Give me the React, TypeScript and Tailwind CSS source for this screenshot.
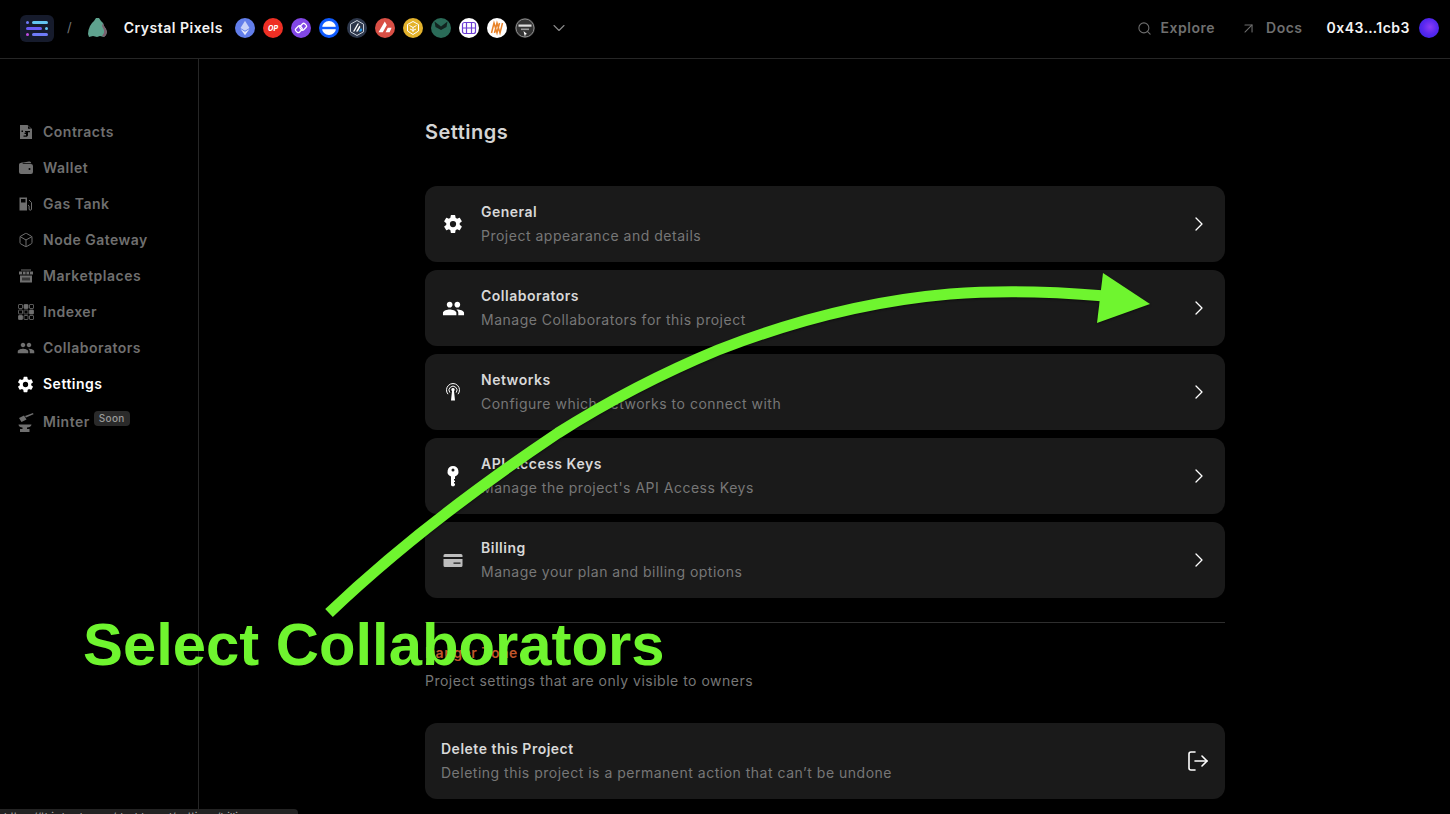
import { ReactNode } from "react"
import { ChevronDown, ChevronRight, Search, ArrowUpRight, LogOut, Box } from "lucide-react"
import { MdPeople } from "react-icons/md"
import { IoSettingsSharp, IoWallet } from "react-icons/io5"

function ContractIcon() {
  return (
    <svg width="12" height="14" viewBox="0 0 12 14" fill="currentColor">
      <path fillRule="evenodd" d="M0 0h7.500L12 4v10H0V0zm8 1v2.700h3L8 1zM5 6h5v1.200H8V10c0 1-.8 1.800-2 1.800H3.500v-1.300H6V9H4.500V7.800H6V7.200H5V6zM1.500 5.500H3V7H1.500V5.500z" />
    </svg>
  )
}

function GasIcon() {
  return (
    <svg width="16" height="16" viewBox="0 0 16 16" fill="none">
      <path fill="currentColor" fillRule="evenodd" d="M1.500 1.500h7.500v13H1.500v-13zM3 3v3.500h4.500V3H3z" />
      <path stroke="currentColor" strokeWidth="1" d="M11 4l2.500 2.500v6.500a1.200 1.200 0 0 1-2.400 0V10L10 9" />
    </svg>
  )
}

function ShopIcon() {
  return (
    <svg width="16" height="16" viewBox="0 0 16 16" fill="currentColor">
      <path d="M3 1.500h10v1H3zM1 3.500h14v3H1zM2 7.500h12v7H2z" />
      <path stroke="#000" strokeWidth="0.800" d="M4.500 3.500v3M8 3.500v3M11.500 3.500v3" />
      <path fill="#000" d="M4 9.500h8v3H4z" opacity="0.500" />
    </svg>
  )
}

function GridIcon() {
  const cells = [0, 1, 0, 0, 0, 1, 1, 0, 0]
  return (
    <svg width="16" height="16" viewBox="0 0 16 16" fill="none">
      {cells.map((on, i) => (
        <rect
          key={i}
          x={0.500 + (i % 3) * 5.500}
          y={0.500 + Math.floor(i / 3) * 5.500}
          width="4"
          height="4"
          rx="0.500"
          fill={on ? "currentColor" : "none"}
          stroke="currentColor"
          strokeWidth="0.800"
        />
      ))}
    </svg>
  )
}

function AnvilIcon() {
  return (
    <svg width="17" height="19" viewBox="0 0 17 19" fill="currentColor">
      <path d="M2 5l5-2.500 2.500 4-5 2.500zM8 3l8-3 .5 1.200L9 4.500z" />
      <path d="M1.500 11.500h13c0 2-2.500 3-4.500 3v1.500h2.500V19H3v-3h2.500v-1.500c-2 0-4-1-4-3z" />
    </svg>
  )
}

function TowerIcon() {
  return (
    <svg width="16" height="18" viewBox="0 0 16 18" fill="none" stroke="currentColor" strokeWidth="1">
      <path d="M3 11.200a6.500 6.500 0 1 1 10 0" />
      <path d="M4.800 9.600a4 4 0 1 1 6.400 0" />
      <path fill="currentColor" stroke="none" d="M8 5a1.700 1.700 0 0 1 1 3.100L10 17.500H6L7 8.100A1.700 1.700 0 0 1 8 5z" />
    </svg>
  )
}

function KeyIcon() {
  return (
    <svg width="20" height="22" viewBox="0 0 20 22" fill="currentColor">
      <path fillRule="evenodd" d="M10 1a5.500 5.500 0 0 1 2 10.600V14h-1v1.500h1V17h-1v1.500h1V20l-1 1.200H9l-1-1V11.600A5.500 5.500 0 0 1 10 1zm0 2.500a1.500 1.500 0 1 0 0 3 1.500 1.500 0 0 0 0-3z" />
    </svg>
  )
}

function CardIcon() {
  return (
    <svg width="20" height="13" viewBox="0 0 20 13" fill="#bdbdbd">
      <path d="M2 0h16a1.500 1.500 0 0 1 1.500 1.500V3H.5V1.500A1.500 1.500 0 0 1 2 0z" />
      <path fillRule="evenodd" d="M.5 5h19v6.500A1.500 1.500 0 0 1 18 13H2a1.500 1.500 0 0 1-1.500-1.500V5zM10.500 8.500v1.300h7V8.500h-7z" />
    </svg>
  )
}

function ChainIcon({ children }: { children: ReactNode }) {
  return (
    <svg width="20" height="20" viewBox="0 0 20 20" className="shrink-0">
      {children}
    </svg>
  )
}

function Chains() {
  return (
    <div className="flex items-center gap-2">
      <ChainIcon>
        <circle cx="10" cy="10" r="10" fill="#627eea" />
        <path d="M10 2.800l4.500 7.200L10 12.700 5.500 10z" fill="#c9d3f8" />
        <path d="M10 13.800l4.500-2.800L10 17.200 5.500 11z" fill="#e4e9fc" />
      </ChainIcon>
      <ChainIcon>
        <circle cx="10" cy="10" r="10" fill="#ee2f24" />
        <text x="10" y="12.500" textAnchor="middle" fontSize="7" fontWeight="800" fontStyle="italic" fill="#fff" fontFamily="Inter, sans-serif">OP</text>
      </ChainIcon>
      <ChainIcon>
        <circle cx="10" cy="10" r="10" fill="#8247e5" />
        <rect x="4.600" y="8.800" width="6.500" height="5" rx="1.500" transform="rotate(-45 7.800 11.300)" fill="none" stroke="#fff" strokeWidth="1.300" />
        <rect x="8.900" y="6.200" width="6.500" height="5" rx="1.500" transform="rotate(-45 12.200 8.700)" fill="none" stroke="#fff" strokeWidth="1.300" />
      </ChainIcon>
      <ChainIcon>
        <circle cx="10" cy="10" r="10" fill="#0f5bff" />
        <circle cx="10" cy="10" r="7" fill="#fff" />
        <rect x="3" y="8.800" width="14" height="2.400" fill="#0f5bff" />
      </ChainIcon>
      <ChainIcon>
        <circle cx="10" cy="10" r="10" fill="#2d374b" />
        <path d="M10 2.500l6.500 3.700v7.600L10 17.500l-6.500-3.700V6.200z" fill="none" stroke="#d9e0ea" strokeWidth="0.900" />
        <path d="M6 13.500l4.500-8H12l-4.500 8zM9 13.500l3.500-6 .9 1.600-2.600 4.400z" fill="#fff" />
        <path d="M11.800 13.500l2.200-3.600 1.200 2.100-1 1.500z" fill="#28a0f0" />
      </ChainIcon>
      <ChainIcon>
        <circle cx="10" cy="10" r="10" fill="#d94f45" />
        <path d="M9.800 3.500l2 3.400-4 7.300H3.500zM12.800 9.800h3.800l-2 4.400h-4z" fill="#fff" />
      </ChainIcon>
      <ChainIcon>
        <circle cx="10" cy="10" r="10" fill="#e3b22c" />
        <path d="M10 3.500l5.500 3v6.500L10 16.500 4.500 13V6.500z" fill="none" stroke="#fff" strokeWidth="1" />
        <path d="M6.500 7.500L10 9.500l3.500-2M10 9.500v4.500M7 11l3 1.500 3-1.500" fill="none" stroke="#fff" strokeWidth="1" />
      </ChainIcon>
      <ChainIcon>
        <circle cx="10" cy="10" r="10" fill="#2a6b58" />
        <path d="M3.500 3.500L10 8.500l6.500-5-1 5.500-5.500 3-5.500-3z" fill="#12231f" />
      </ChainIcon>
      <ChainIcon>
        <circle cx="10" cy="10" r="10" fill="#fff" />
        <rect x="3.500" y="4.500" width="13" height="11" rx="2" fill="none" stroke="#6d3fd4" strokeWidth="1.200" />
        <path d="M3.500 10h13M7.500 4.500v11M12.500 4.500v11" stroke="#6d3fd4" strokeWidth="1.200" />
      </ChainIcon>
      <ChainIcon>
        <circle cx="10" cy="10" r="10" fill="#fff" />
        <path d="M4.500 15l2.500-10 3 10 2.500-10M7.500 15l2.500-10 3 10 2.500-10" stroke="#e8832a" strokeWidth="1.500" fill="none" />
      </ChainIcon>
      <ChainIcon>
        <circle cx="10" cy="10" r="10" fill="#333" />
        <circle cx="10" cy="10" r="9" fill="none" stroke="#888" strokeWidth="1" />
        <rect x="3.500" y="6.500" width="13" height="2.200" fill="#ddd" />
        <rect x="6" y="10.500" width="8" height="1.600" fill="#999" />
        <path d="M8.500 13l3.500 3-1.500.5L10 19z" fill="#fff" />
      </ChainIcon>
    </div>
  )
}

function Header() {
  return (
    <header className="flex h-[59px] items-center justify-between border-b border-[#262626] pr-[11px] pb-0.5 pl-5">
      <div className="flex items-center">
        <div className="flex h-[27px] w-[34px] flex-col justify-center gap-[3px] rounded-md bg-[#161b2c] px-1.5">
          <div className="flex items-center gap-[3px]">
            <span className="size-[3px] rounded-full bg-[#6f7bf7]" />
            <span className="h-[3px] w-[16px] rounded-full bg-[#63c5f0]" />
          </div>
          <div className="flex items-center gap-[3px]">
            <span className="h-[3px] w-[16px] rounded-full bg-[#6a5cf5]" />
            <span className="size-[3px] rounded-full bg-[#63c5f0]" />
          </div>
          <div className="flex items-center gap-[3px]">
            <span className="size-[3px] rounded-full bg-[#c04be0]" />
            <span className="h-[3px] w-[16px] rounded-full bg-[#6f7bf7]" />
          </div>
        </div>
        <span className="ml-[13px] text-[13px] text-[#777]">/</span>
        <svg width="24" height="24" viewBox="0 0 24 24" className="ml-[13px]">
          <path d="M11 2h3l2 3 2 2 1 3 2 3 1 3-1 3-2 2-4-1-3 1-4-1-4 1-1-3 .5-4L5 10l2-3 2-2z" fill="#5ea28e" />
          <path d="M18 7l1 3 2 3 1 3-1 3-2 2-2-1 2-3v-3l-2-4z" fill="#7a5f6e" />
        </svg>
        <span className="ml-[15px] text-sm font-semibold tracking-[0.5px] text-[#f4f4f4]">Crystal Pixels</span>
        <div className="ml-[12px]">
          <Chains />
        </div>
        <ChevronDown className="ml-[14px] size-[20px] text-[#8a8a8a]" strokeWidth={1.300} />
      </div>
      <div className="flex items-center text-sm font-semibold tracking-[0.5px] text-[#6f6f6f]">
        <Search className="size-[15px]" strokeWidth={1.700} />
        <span className="ml-[9px]">Explore</span>
        <ArrowUpRight className="ml-[25px] size-[17px]" strokeWidth={1.500} />
        <span className="ml-[9px]">Docs</span>
        <span className="ml-[24px] text-[#f4f4f4]">0x43…1cb3</span>
        <span className="ml-[9px] size-5 rounded-full bg-[radial-gradient(circle_at_55%_45%,#8a3cf5_0%,#5a28f0_45%,#2a22e0_100%)]" />
      </div>
    </header>
  )
}

const navItems: { label: string; icon: ReactNode; active?: boolean }[] = [
  { label: "Contracts", icon: <ContractIcon /> },
  { label: "Wallet", icon: <IoWallet size={16} /> },
  { label: "Gas Tank", icon: <GasIcon /> },
  { label: "Node Gateway", icon: <Box size={16} strokeWidth={1.500} /> },
  { label: "Marketplaces", icon: <ShopIcon /> },
  { label: "Indexer", icon: <GridIcon /> },
  { label: "Collaborators", icon: <MdPeople size={18} /> },
  { label: "Settings", icon: <IoSettingsSharp size={17} />, active: true },
]

function Sidebar() {
  return (
    <aside className="h-full w-[199px] shrink-0 border-r border-[#262626] pt-[55px]">
      {navItems.map((item) => (
        <div
          key={item.label}
          className={`flex h-9 items-center text-sm font-semibold tracking-[0.5px] ${item.active ? "text-white" : "text-[#6f6f6f]"}`}
        >
          <span className="flex w-[43px] shrink-0 justify-center pl-[8px]">{item.icon}</span>
          {item.label}
        </div>
      ))}
      <div className="flex h-[38px] items-center pt-[2px] text-sm font-semibold tracking-[0.5px] text-[#6f6f6f]">
        <span className="flex w-[43px] shrink-0 justify-center pl-[8px]">
          <AnvilIcon />
        </span>
        Minter
        <span className="mb-[7px] ml-1 rounded-[4px] bg-[#2a2a2a] px-[5px] py-px text-[10px] leading-[13px] font-medium tracking-[0.3px] text-[#9a9a9a]">
          Soon
        </span>
      </div>
    </aside>
  )
}

const settings: { title: string; text: string; icon: ReactNode }[] = [
  { title: "General", text: "Project appearance and details", icon: <IoSettingsSharp size={20} /> },
  { title: "Collaborators", text: "Manage Collaborators for this project", icon: <MdPeople size={23} /> },
  { title: "Networks", text: "Configure which networks to connect with", icon: <TowerIcon /> },
  { title: "API Access Keys", text: "Manage the project's API Access Keys", icon: <KeyIcon /> },
  { title: "Billing", text: "Manage your plan and billing options", icon: <CardIcon /> },
]

function SettingsCard({ title, text, icon }: { title: string; text: string; icon: ReactNode }) {
  return (
    <div className="flex h-[76px] items-center rounded-xl bg-[#1a1a1a] pr-[14px]">
      <span className="flex w-14 shrink-0 justify-center text-white">{icon}</span>
      <div className="flex-1">
        <div className="text-sm leading-5 font-semibold tracking-[0.5px] text-[#d8d8d8]">{title}</div>
        <div className="mt-1 text-sm leading-5 tracking-[0.5px] text-[#777]">{text}</div>
      </div>
      <ChevronRight className="size-6 text-white" strokeWidth={1.300} />
    </div>
  )
}

function Annotation() {
  return (
    <>
      <svg
        width="1450"
        height="814"
        viewBox="0 0 1450 814"
        className="pointer-events-none absolute top-0 left-0 drop-shadow-[0_1px_1px_rgba(0,0,0,0.5)]"
        fill="none"
      >
        <path d="M329 613C395 550 470 492 558 433C610 400 665 372 718 350C800 318 880 300 950 294C1000 290 1060 292 1105 296" stroke="#6ff52f" strokeWidth="11" />
        <path d="M1103 273L1150 304L1097 323z" fill="#6ff52f" />
      </svg>
      <div className="pointer-events-none absolute top-[608px] left-[83px] font-['Liberation_Sans',Arial,sans-serif] text-[59.8px] leading-[74px] font-bold whitespace-nowrap text-[#6ff52f]">
        Select Collaborators
      </div>
    </>
  )
}

export default function App() {
  return (
    <div className="relative flex h-[814px] w-full flex-col overflow-hidden bg-black font-['Inter',sans-serif]">
      <Header />
      <div className="flex min-h-0 flex-1">
        <Sidebar />
        <main className="ml-[226px] w-[800px] pt-[59px]">
          <h1 className="text-xl leading-7 font-semibold tracking-[0.5px] text-[#d4d4d4]">Settings</h1>
          <div className="mt-[40px] flex flex-col gap-2">
            {settings.map((s) => (
              <SettingsCard key={s.title} {...s} />
            ))}
          </div>
          <div className="mt-6 border-t border-[#2e2e2e] pt-[20px]">
            <h2 className="text-sm leading-5 font-semibold tracking-[0.5px] text-[#c0562a]">Danger Zone</h2>
            <p className="mt-2 text-sm leading-5 tracking-[0.5px] text-[#777]">Project settings that are only visible to owners</p>
          </div>
          <div className="mt-[32px] flex h-[76px] items-center rounded-xl bg-[#1a1a1a] pr-[15px] pl-4">
            <div className="flex-1">
              <div className="text-sm leading-5 font-semibold tracking-[0.5px] text-[#d8d8d8]">Delete this Project</div>
              <div className="mt-1 text-sm leading-5 tracking-[0.5px] text-[#777]">Deleting this project is a permanent action that can’t be undone</div>
            </div>
            <LogOut className="size-6 text-white" strokeWidth={1.600} />
          </div>
        </main>
      </div>
      <Annotation />
      <div className="absolute bottom-0 left-0 h-[5px] w-[298px] overflow-hidden rounded-tr-sm bg-[#232323] pt-[2px] pl-1 text-[11px] leading-[13px] text-[#aaa]">
        https://thirdweb.com/dashboard/settings/billing
      </div>
    </div>
  )
}
